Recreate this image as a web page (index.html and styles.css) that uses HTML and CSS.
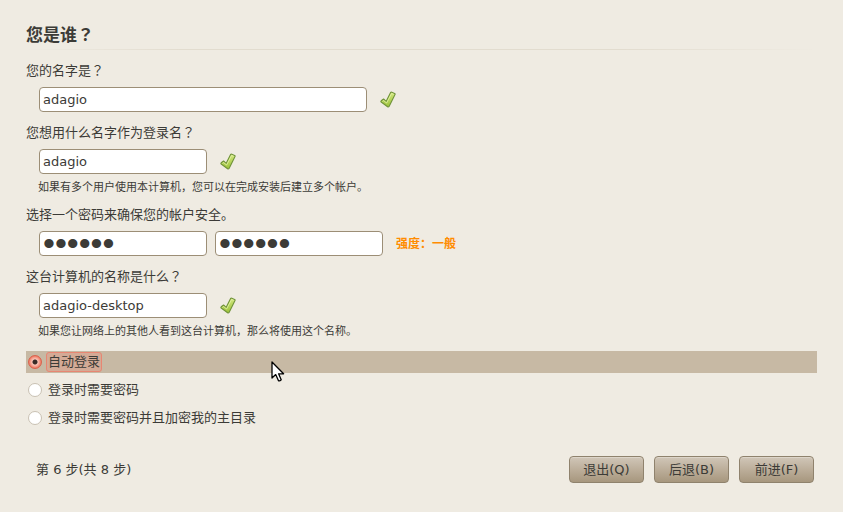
FILE: index.html
```html
<!DOCTYPE html>
<html lang="zh-CN">
<head>
    <meta charset="UTF-8">
    <meta name="viewport" content="width=device-width, initial-scale=1.0">
    <title>安装</title>
    <link rel="stylesheet" href="styles.css">
</head>
<body>
    <svg class="defs" aria-hidden="true">
        <defs>
            <linearGradient id="tickFill" x1="0" y1="0" x2="0" y2="1">
                <stop offset="0" stop-color="#d3e87e"/>
                <stop offset="1" stop-color="#9cc23a"/>
            </linearGradient>
            <symbol id="tick" viewBox="0 0 18 18">
                <path d="M2.2 9.8 L4.6 8 L7.2 10.3 L11.6 1.6 Q12 .9 12.8 1.2 L15.6 2.4 Q16.4 2.8 16 3.6 L10.2 15.2 Q9.6 16.2 8.6 15.8 L2.2 11 Q1.5 10.4 2.2 9.8 Z" fill="url(#tickFill)" stroke="#70933a" stroke-width="1.1" stroke-linejoin="round"/>
                <path d="M3.5 10.4 L4.6 9.5 L7.6 12 L12.6 2.5 L14.6 3.3" fill="none" stroke="#e5f3a9" stroke-width=".8"/>
            </symbol>
        </defs>
    </svg>

    <form class="wizard">
        <h1>您是谁<span class="mark" lang="zh-TW">？</span></h1>

        <div class="question">
            <label for="fullname">您的名字是<span class="mark" lang="zh-TW">？</span></label>
            <div class="fields">
                <input type="text" id="fullname" class="wide" value="adagio">
                <svg class="tick" aria-hidden="true"><use href="#tick"/></svg>
            </div>
        </div>

        <div class="question">
            <label for="username">您想用什么名字作为登录名<span class="mark" lang="zh-TW">？</span></label>
            <div class="fields">
                <input type="text" id="username" value="adagio">
                <svg class="tick" aria-hidden="true"><use href="#tick"/></svg>
            </div>
            <p class="hint">如果有多个用户使用本计算机，您可以在完成安装后建立多个帐户。</p>
        </div>

        <div class="question">
            <label for="password">选择一个密码来确保您的帐户安全。</label>
            <div class="fields">
                <input type="password" id="password" value="adagio">
                <input type="password" id="verify" value="adagio" aria-label="确认密码">
                <strong class="strength">强度：一般</strong>
            </div>
        </div>

        <div class="question">
            <label for="hostname">这台计算机的名称是什么<span class="mark" lang="zh-TW">？</span></label>
            <div class="fields">
                <input type="text" id="hostname" value="adagio-desktop">
                <svg class="tick" aria-hidden="true"><use href="#tick"/></svg>
            </div>
            <p class="hint">如果您让网络上的其他人看到这台计算机，那么将使用这个名称。</p>
        </div>

        <div class="login-options">
            <label class="option selected">
                <input type="radio" name="login" value="auto" checked>
                <span>自动登录</span>
            </label>
            <label class="option">
                <input type="radio" name="login" value="password">
                <span>登录时需要密码</span>
            </label>
            <label class="option">
                <input type="radio" name="login" value="encrypt">
                <span>登录时需要密码并且加密我的主目录</span>
            </label>
        </div>

        <footer>
            <span class="step">第 6 步(共 8 步)</span>
            <button type="button">退出(Q)</button>
            <button type="button">后退(B)</button>
            <button type="submit">前进(F)</button>
        </footer>
    </form>

    <svg class="pointer" viewBox="0 0 14 22" aria-hidden="true">
        <path d="M1 1 V17 L4.7 13.6 L7.4 19.6 Q8.6 20.4 10.2 18.8 L7.6 12.8 H12.6 Z" fill="#fff" stroke="#000" stroke-width="1.3" stroke-linejoin="round"/>
    </svg>
</body>
</html>
```

FILE: styles.css
```css
* {
    box-sizing: border-box;
}
body {
    margin: 0;
    background: #efebe2;
    color: #3c3b37;
    font-family: "DejaVu Sans", "Noto Sans CJK SC", sans-serif;
    font-size: 13px;
    line-height: 20px;
}
.defs {
    position: absolute;
    width: 0;
    height: 0;
}
.wizard {
    padding: 24px 26px;
}
h1 {
    margin: 0 0 11px;
    padding-bottom: 3px;
    border-bottom: 1px solid;
    border-image: linear-gradient(to right, #efebe2, #e2dccf 20%, #e2dccf 75%, #efebe2) 1;
    font-size: 17px;
    line-height: 22px;
}
/* centred question mark */
.mark {
    font-family: "Noto Sans CJK TC", sans-serif;
    line-height: 1;
}
.question {
    margin-bottom: 11px;
}
.question > label {
    display: block;
    margin-bottom: 6px;
}
.fields {
    display: flex;
    align-items: center;
    gap: 8px;
    padding-left: 13px;
}
.fields input {
    width: 168px;
    height: 25px;
    padding: 0 3px;
    border: 1px solid #9c8e76;
    border-radius: 4px;
    background: #fff;
    color: inherit;
    font: inherit;
    outline: none;
}
.fields .wide {
    width: 328px;
}
/* large type gives full-sized password bullets */
.fields input[type="password"] {
    font-family: "Liberation Sans", sans-serif;
    font-size: 34px;
    line-height: 23px;
}
.tick {
    width: 18px;
    height: 18px;
    margin-left: 4px;
}
.hint {
    margin: 7px 0 0 12px;
    font-size: 11px;
    line-height: 13px;
}
.strength {
    margin-left: 5px;
    color: #ff8c00;
    font-size: 12px;
}
.login-options {
    display: flex;
    flex-direction: column;
    gap: 6px;
    padding-top: 2px;
}
.option {
    display: flex;
    align-items: center;
    gap: 4px;
    height: 22px;
    padding-left: 2px;
}
.option.selected {
    background: #c7b9a4;
}
.option span {
    padding: 0 1px;
    border: 1px solid transparent;
    border-radius: 3px;
    line-height: 18px;
}
.selected span {
    border-color: #e88672;
    background: #d3aa96;
}
.option input {
    appearance: none;
    width: 14px;
    height: 14px;
    margin: 0;
    border: 1px solid #c9c1b3;
    border-radius: 50%;
    background: #fff;
}
.option input:checked {
    border-color: #d8624c;
    background: radial-gradient(circle, #3a2b27 0 2px, #fbc4b6 3px, #ef7a64 6px);
}
footer {
    display: flex;
    align-items: center;
    gap: 10px;
    margin-top: 27px;
    padding: 0 3px 0 10px;
}
.step {
    margin-right: auto;
}
button {
    min-width: 75px;
    height: 27px;
    padding: 0 12px;
    border: 1px solid #8f826d;
    border-radius: 4px;
    background: linear-gradient(#d0c6b8, #bcae9a 50%, #a7977e);
    box-shadow: inset 0 1px #ddd5c9;
    color: inherit;
    font: inherit;
}
.pointer {
    position: absolute;
    left: 271px;
    top: 361px;
    width: 14px;
    height: 22px;
}
```
